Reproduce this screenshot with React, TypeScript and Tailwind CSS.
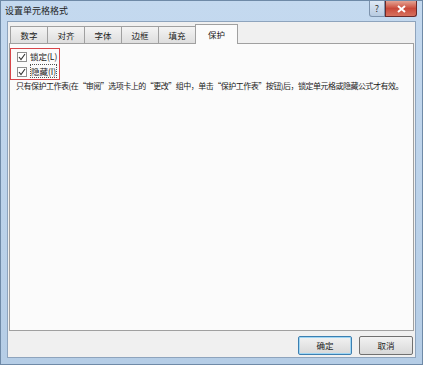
import React from 'react';

const font = { fontFamily: '"Noto Sans CJK SC", "Liberation Sans", sans-serif' };

const tabs = ['数字', '对齐', '字体', '边框', '填充'];

function Check({ label }: { label: React.ReactNode }) {
    return (
        <div className="flex items-center gap-[3px] h-[14px] whitespace-nowrap">
            <span className="w-[10px] h-[10px] shrink-0 border border-[#8f8f8f] bg-white flex items-center justify-center">
                <svg width="8" height="8" viewBox="0 0 8 8">
                    <path d="M1 4 L3 6.5 L7 1" stroke="#333" strokeWidth="1.1" fill="none" />
                </svg>
            </span>
            <span className="text-[8.5px] text-[#1a1a1a] leading-none whitespace-nowrap">{label}</span>
        </div>
    );
}

export default function App() {
    return (
        <div
            className="w-[423px] h-[365px] flex flex-col bg-gradient-to-b from-[#c4d9ef] to-[#b5cde6] border border-[#6f8aa7]"
            style={font}
        >
            {/* title bar */}
            <div className="h-[20px] flex items-start relative">
                <span className="mt-[5px] ml-[4px] text-[9px] text-[#222] leading-none">设置单元格格式</span>
                <div className="ml-auto flex mr-[5px]">
                    <div className="w-[16px] h-[16px] border border-[#7d93ad] border-t-0 rounded-bl-[3px] bg-gradient-to-b from-[#dfe9f5] to-[#b8cbe1] flex items-center justify-center text-[9px] text-[#333] leading-none">
                        ?
                    </div>
                    <div className="w-[32px] h-[16px] border border-[#6a2a2a] border-t-0 rounded-br-[3px] bg-gradient-to-b from-[#e3a394] via-[#c9493a] to-[#d6705e] flex items-center justify-center">
                        <svg width="9" height="8" viewBox="0 0 9 8">
                            <path d="M1 1 L8 7 M8 1 L1 7" stroke="#fff" strokeWidth="2" />
                        </svg>
                    </div>
                </div>
            </div>

            {/* client */}
            <div className="flex-1 mx-[6px] mb-[6px] bg-[#f0f0f0] border border-[#8ea4bd] flex flex-col px-[1px]">
                <div className="flex items-end h-[21px] pl-[1px]">
                    {tabs.map((t) => (
                        <div
                            key={t}
                            className="w-[38px] h-[17px] border border-[#a0a0a0] border-b-0 -mr-px bg-gradient-to-b from-[#f4f4f4] to-[#dedede] flex items-center justify-center text-[8.5px] text-[#222] leading-none"
                        >
                            {t}
                        </div>
                    ))}
                    <div className="w-[43px] h-[20px] border border-[#a0a0a0] border-b-0 bg-[#fbfbfb] flex items-center justify-center text-[8.5px] text-[#222] leading-none -mb-px relative z-10">
                        保护
                    </div>
                </div>
                <div className="h-[288px] bg-[#fbfbfb] border border-[#a0a0a0] flex flex-col px-[6px] pt-[4px]">
                    <div className="w-[50px] h-[32px] -ml-[6px] border border-[#d8454a] flex flex-col justify-center pl-[6px] gap-[1px]">
                        <Check label="锁定(L)" />
                        <Check label={<span className="border border-dotted border-[#555]">隐藏(I)</span>} />
                    </div>
                    <p className="mt-[2px] text-[8px] text-[#1a1a1a] leading-none whitespace-nowrap tracking-[-0.5px]">
                        只有保护工作表(在“审阅”选项卡上的“更改”组中，单击“保护工作表”按钮)后，锁定单元格或隐藏公式才有效。
                    </p>
                </div>
                <div className="flex justify-end gap-[7px] mt-[5px] mr-[1px]">
                    <button className="w-[54px] h-[19px] border border-[#3c7fb1] rounded-[2px] bg-gradient-to-b from-[#f2f2f2] to-[#d8d8d8] shadow-[inset_0_0_0_1px_#9fd6f4] text-[8.5px] text-[#222] leading-none">
                        确定
                    </button>
                    <button className="w-[54px] h-[19px] border border-[#707070] rounded-[2px] bg-gradient-to-b from-[#f2f2f2] to-[#d8d8d8] text-[8.5px] text-[#222] leading-none">
                        取消
                    </button>
                </div>
            </div>
        </div>
    );
}
